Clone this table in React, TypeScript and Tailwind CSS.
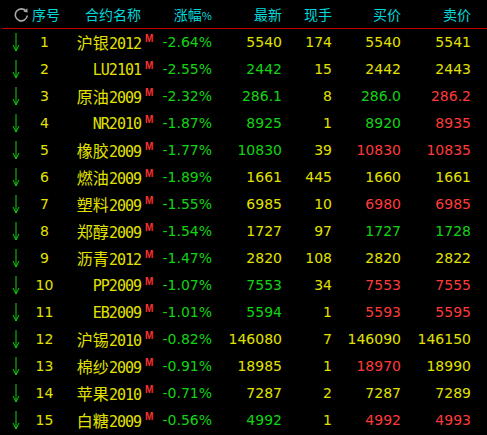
import React from "react";

type C = "y" | "g" | "r";
const rows: [string, string, string, C, string, string, C, string, C][] = [
  ["沪银2012", "-2.64%", "5540", "y", "174", "5540", "y", "5541", "y"],
  ["LU2101", "-2.55%", "2442", "g", "15", "2442", "y", "2443", "y"],
  ["原油2009", "-2.32%", "286.1", "g", "8", "286.0", "g", "286.2", "r"],
  ["NR2010", "-1.87%", "8925", "g", "1", "8920", "g", "8935", "r"],
  ["橡胶2009", "-1.77%", "10830", "g", "39", "10830", "r", "10835", "r"],
  ["燃油2009", "-1.89%", "1661", "y", "445", "1660", "y", "1661", "y"],
  ["塑料2009", "-1.55%", "6985", "y", "10", "6980", "r", "6985", "r"],
  ["郑醇2009", "-1.54%", "1727", "y", "97", "1727", "g", "1728", "g"],
  ["沥青2012", "-1.47%", "2820", "y", "108", "2820", "y", "2822", "y"],
  ["PP2009", "-1.07%", "7553", "g", "34", "7553", "r", "7555", "r"],
  ["EB2009", "-1.01%", "5594", "g", "1", "5593", "r", "5595", "r"],
  ["沪锡2010", "-0.82%", "146080", "y", "7", "146090", "y", "146150", "y"],
  ["棉纱2009", "-0.91%", "18985", "y", "1", "18970", "r", "18990", "y"],
  ["苹果2010", "-0.71%", "7287", "y", "2", "7287", "y", "7289", "y"],
  ["白糖2009", "-0.56%", "4992", "g", "1", "4992", "r", "4993", "r"],
];

const colorCls: Record<C, string> = {
  y: "text-[#e2e200]",
  g: "text-[#12d412]",
  r: "text-[#ff3a3a]",
};

const grid =
  "grid grid-cols-[30px_28px_83px_17px_54px_70px_50px_69px_70px_16px]";

const numFont = "font-['DejaVu_Sans',sans-serif] text-[14px]";
const num = `${numFont} text-right`;

function Name({ s }: { s: string }) {
  const parts = s.match(/[\u4e00-\u9fff]+|[^\u4e00-\u9fff]+/g) || [];
  return (
    <span className="whitespace-nowrap">
      {parts.map((p, i) =>
        /[\u4e00-\u9fff]/.test(p) ? (
          <span
            key={i}
            className="font-['Noto_Sans_CJK_SC',sans-serif] text-[16px]"
          >
            {p}
          </span>
        ) : (
          <span
            key={i}
            className="font-['DejaVu_Sans_Mono',monospace] text-[15px] tracking-[-1px]"
          >
            {p}
          </span>
        )
      )}
    </span>
  );
}

function DownArrow() {
  return (
    <svg width="8" height="19" viewBox="0 0 8 19" className="mx-auto">
      <line x1="4" y1="0" x2="4" y2="18" stroke="#12d412" strokeWidth="1" />
      <polyline
        points="1,12 4,18 7,12"
        fill="none"
        stroke="#12d412"
        strokeWidth="1"
      />
    </svg>
  );
}

function Refresh() {
  return (
    <svg width="15" height="15" viewBox="0 0 15 15">
      <path
        d="M12.3 4.5 A6 6 0 1 0 13.3 8.5"
        fill="none"
        stroke="#a8a8a8"
        strokeWidth="1.6"
      />
      <polygon points="9.5,4.8 13.8,5.6 13.2,1.2" fill="#a8a8a8" />
    </svg>
  );
}

export default function App() {
  const hd =
    "font-['Noto_Sans_CJK_SC',sans-serif] text-[14px] text-[#00d8dc] text-right whitespace-nowrap";
  return (
    <div className="w-[487px] h-[435px] bg-black overflow-hidden select-none">
      <div className={`${grid} h-[28px] items-center`}>
        <div className="flex justify-end pr-[1px]">
          <Refresh />
        </div>
        <div className="font-['Noto_Sans_CJK_SC',sans-serif] text-[14px] text-[#00d8dc] text-left pl-[2px] whitespace-nowrap">
          序号
        </div>
        <div className={hd}>合约名称</div>
        <div />
        <div className={hd}>
          涨幅<span className="text-[11px]">%</span>
        </div>
        <div className={hd}>最新</div>
        <div className={hd}>现手</div>
        <div className={hd}>买价</div>
        <div className={hd}>卖价</div>
        <div />
      </div>
      <div className="ml-[2px] h-[1px] bg-[#c80000]" />
      {rows.map((r, i) => (
        <div key={i} className={`${grid} h-[27px] items-center`}>
          <div className="flex justify-center pl-[2px]">
            <DownArrow />
          </div>
          <div className={`${numFont} text-center text-[#e2e200] pl-[1px]`}>
            {i + 1}
          </div>
          <div className="text-right text-[#e2e200] leading-none">
            <Name s={r[0]} />
          </div>
          <div className="self-start pt-[5px] pl-[4px] font-['Liberation_Sans',sans-serif] font-bold text-[10px] leading-none text-[#ff3030]">
            M
          </div>
          <div className={`${num} ${colorCls.g}`}>{r[1]}</div>
          <div className={`${num} ${colorCls[r[3]]}`}>{r[2]}</div>
          <div className={`${num} text-[#e2e200]`}>{r[4]}</div>
          <div className={`${num} ${colorCls[r[6]]}`}>{r[5]}</div>
          <div className={`${num} ${colorCls[r[8]]}`}>{r[7]}</div>
          <div />
        </div>
      ))}
    </div>
  );
}
